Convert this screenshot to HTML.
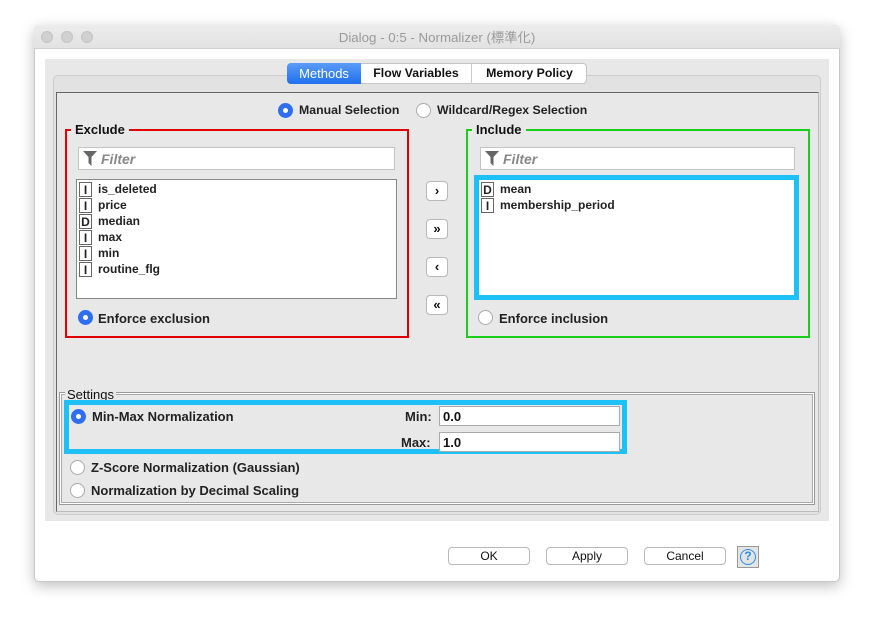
<!DOCTYPE html>
<html><head><meta charset="utf-8"><style>
*{box-sizing:border-box;margin:0;padding:0}
body{width:874px;height:624px;background:#fff;position:relative;overflow:hidden;font-family:"Liberation Sans","Noto Sans CJK JP",sans-serif;font-size:13px;color:#111}
.a{position:absolute}
.win{left:34px;top:25px;width:806px;height:557px;background:#fff;border:1px solid #c8c8c8;border-radius:5px;box-shadow:0 4px 14px rgba(0,0,0,.25)}
.title{left:34px;top:25px;width:806px;height:24px;background:linear-gradient(#ececec,#e2e2e2);border-bottom:1px solid #d0d0d0;border-radius:5px 5px 0 0;text-align:center;line-height:25px;color:#9a9a9a;font-size:13.3px}
.dot{width:12px;height:12px;border-radius:50%;background:#d0d0d0;top:31px;border:1px solid #c4c4c4}
.red{border:2px solid #e00000}
.green{border:2px solid #18d018}
.lg{background:#e8e8e8;padding:0 4px;font-weight:bold}
.filt{background:#fff;border:1px solid #c4c4c4;height:23px;color:#888;font-style:italic;font-weight:bold;padding-left:22px;line-height:23px;font-size:14px}
.list{background:#fff;border:1px solid #888}
.it{height:16px;line-height:17px;font-size:12px;font-weight:bold;position:relative;padding-left:21px;color:#222}
.it b{position:absolute;left:2px;top:1px;width:13px;height:15px;border:1px solid #666;font-size:12px;text-align:center;line-height:14px}
.btn{background:#fff;border:1px solid #b8b8b8;border-radius:4px;width:22px;height:20px;text-align:center;line-height:17px;font-weight:bold;font-size:13px}
.rad{width:15px;height:15px;border-radius:50%;border:1px solid #aaa;background:#fff}
.rad.on{background:#2e6ff2;border-color:#2e6ff2}
.rad.on:after{content:"";position:absolute;left:4px;top:4px;width:5px;height:5px;border-radius:50%;background:#fff}
.lbl{font-weight:bold;font-size:13px;color:#222}
.pb{background:#fff;border:1px solid #b8b8b8;border-radius:4px;height:18px;width:82px;text-align:center;line-height:17px;font-size:12px}
.fld{background:#fff;border:1px solid #aaa;height:20px;width:181px;padding-left:3px;line-height:20px;font-size:13px;font-weight:bold}
</style></head><body>
<div class="a win"></div>
<div class="a title">Dialog - 0:5 - Normalizer (標準化)</div>
<div class="a dot" style="left:41px"></div><div class="a dot" style="left:61px"></div><div class="a dot" style="left:81px"></div>

<div class="a" style="left:45px;top:59px;width:784px;height:462px;background:#e8e8e8"></div>
<div class="a" style="left:53px;top:75px;width:768px;height:440px;background:#e2e2e2;border:1px solid #ccc;border-radius:5px"></div>
<div class="a" style="left:56px;top:92px;width:763px;height:420px;background:#e8e8e8;border:1px solid #666;border-right-color:#bbb;border-bottom-color:#bbb"></div>

<div class="a" style="left:287px;top:63px;width:300px;height:21px;background:#fff;border:1px solid #c4c4c4;border-radius:4px"></div>
<div class="a" style="left:287px;top:63px;width:74px;height:21px;background:linear-gradient(#5a9bf8,#1f6ff0);border-radius:4px 0 0 4px;color:#fff;text-align:center;line-height:21px">Methods</div>
<div class="a" style="left:361px;top:63px;width:111px;height:21px;text-align:center;line-height:21px;border-right:1px solid #ccc;font-weight:bold;font-size:12.3px">Flow Variables</div>
<div class="a" style="left:472px;top:63px;width:115px;height:21px;text-align:center;line-height:21px;font-weight:bold;font-size:12.3px">Memory Policy</div>

<div class="a rad on" style="left:278px;top:103px"></div>
<div class="a lbl" style="left:299px;top:103px;font-size:12.3px">Manual Selection</div>
<div class="a rad" style="left:416px;top:103px"></div>
<div class="a lbl" style="left:437px;top:103px;font-size:12.3px">Wildcard/Regex Selection</div>

<div class="a red" style="left:65px;top:129px;width:344px;height:209px"></div>
<div class="a lg" style="left:71px;top:122px">Exclude</div>
<div class="a filt" style="left:78px;top:147px;width:317px">Filter</div>
<svg class="a" style="left:83px;top:151px" width="14" height="15"><path d="M0 0H14L8.5 6V15L5.5 12V6Z" fill="#666"/></svg>
<div class="a list" style="left:76px;top:179px;width:321px;height:120px;padding-top:1px">
<div class="it"><b>I</b>is_deleted</div><div class="it"><b>I</b>price</div><div class="it"><b>D</b>median</div><div class="it"><b>I</b>max</div><div class="it"><b>I</b>min</div><div class="it"><b>I</b>routine_flg</div></div>
<div class="a rad on" style="left:78px;top:310px"></div>
<div class="a lbl" style="left:98px;top:311px">Enforce exclusion</div>

<div class="a btn" style="left:426px;top:181px">›</div>
<div class="a btn" style="left:426px;top:219px">»</div>
<div class="a btn" style="left:426px;top:257px">‹</div>
<div class="a btn" style="left:426px;top:295px">«</div>

<div class="a green" style="left:466px;top:129px;width:344px;height:209px"></div>
<div class="a lg" style="left:472px;top:122px">Include</div>
<div class="a filt" style="left:480px;top:147px;width:315px">Filter</div>
<svg class="a" style="left:485px;top:151px" width="14" height="15"><path d="M0 0H14L8.5 6V15L5.5 12V6Z" fill="#666"/></svg>
<div class="a list" style="left:474px;top:175px;width:325px;height:125px;border:5px solid #1ec0f8;padding-top:1px">
<div class="it"><b>D</b>mean</div><div class="it"><b>I</b>membership_period</div></div>
<div class="a rad" style="left:478px;top:310px"></div>
<div class="a lbl" style="left:499px;top:311px">Enforce inclusion</div>

<div class="a" style="left:59px;top:392px;width:756px;height:113px;border:1px solid #999;box-shadow:inset 0 0 0 1px #fff,inset 0 0 0 2px #aaa"></div>
<div class="a" style="left:65px;top:387px;background:#e8e8e8;padding:0 2px;font-size:13px">Settings</div>
<div class="a" style="left:64px;top:400px;width:563px;height:54px;border:5px solid #1ec0f8"></div>
<div class="a rad on" style="left:71px;top:409px"></div>
<div class="a lbl" style="left:92px;top:409px">Min-Max Normalization</div>
<div class="a lbl" style="left:405px;top:409px">Min:</div>
<div class="a lbl" style="left:401px;top:435px">Max:</div>
<div class="a fld" style="left:439px;top:406px">0.0</div>
<div class="a fld" style="left:439px;top:432px">1.0</div>
<div class="a rad" style="left:70px;top:460px"></div>
<div class="a lbl" style="left:91px;top:460px">Z-Score Normalization (Gaussian)</div>
<div class="a rad" style="left:70px;top:483px"></div>
<div class="a lbl" style="left:91px;top:483px">Normalization by Decimal Scaling</div>

<div class="a pb" style="left:448px;top:547px">OK</div>
<div class="a pb" style="left:546px;top:547px">Apply</div>
<div class="a pb" style="left:644px;top:547px">Cancel</div>
<div class="a" style="left:737px;top:546px;width:22px;height:22px;background:#e4e4e4;border:1px solid #999"></div>
<div class="a" style="left:740px;top:549px;width:16px;height:16px;border:1.5px solid #2a8ef0;border-radius:50%;color:#2a8ef0;font-weight:bold;font-size:12px;text-align:center;line-height:13px">?</div>
</body></html>
